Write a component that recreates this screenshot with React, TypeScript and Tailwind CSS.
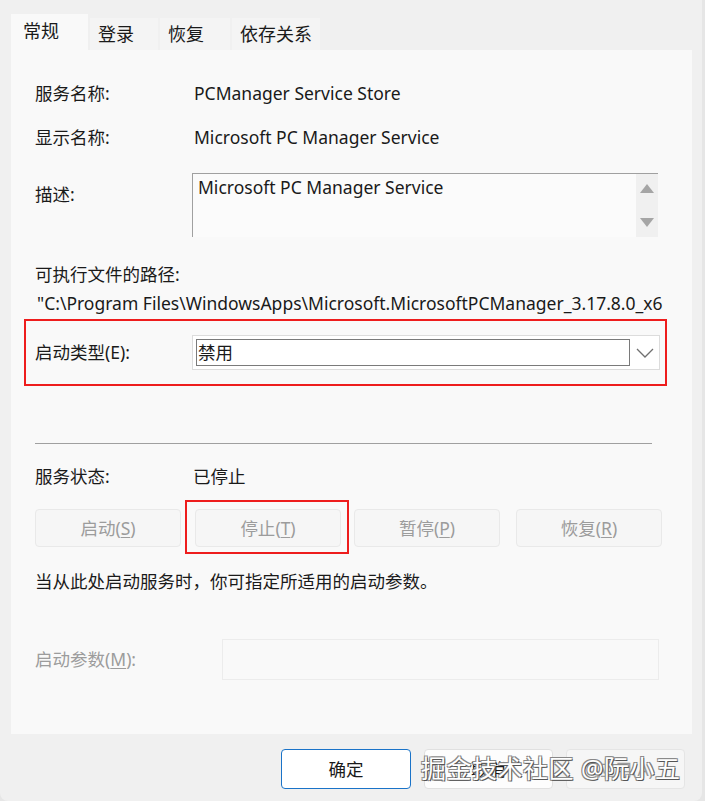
import React from "react";

const font = "font-['Noto_Sans','Noto_Sans_CJK_SC',sans-serif]";

function Tab({ label, width, active }: { label: string; width: string; active?: boolean }) {
  if (active) {
    return (
      <div className={`${width} h-[36px] bg-[#f9f9f9] pl-[12px] pt-[4px] text-[18px] text-[#1a1a1a]`}>
        {label}
      </div>
    );
  }
  return (
    <div className={`${width} mt-[4px] h-[32px] bg-[#f4f4f4] pl-[8px] pt-[3px] text-[18px] text-[#1a1a1a]`}>
      {label}
    </div>
  );
}

function DisabledButton({ text, hot }: { text: string; hot: string }) {
  return (
    <div className="flex h-[38px] w-[146px] items-center justify-center rounded-[4px] border border-[#e9e9e9] bg-[#f6f6f6] text-[17.5px] text-[#9c9c9c]">
      {text}(<span className="underline underline-offset-2">{hot}</span>)
    </div>
  );
}

export default function App() {
  return (
    <div className={`${font} h-[801px] w-[705px] overflow-hidden bg-[#e6e6e6]`}>
      <div className="relative h-[801px] w-[702px] rounded-b-[8px] bg-[#f0f0f0]">
        {/* tab strip */}
        <div className="flex gap-[2px] pl-[11px] pt-[14px]">
          <Tab label="常规" width="w-[77px]" active />
          <Tab label="登录" width="w-[68px]" />
          <Tab label="恢复" width="w-[70px]" />
          <Tab label="依存关系" width="w-[88px]" />
        </div>

        {/* panel */}
        <div className="ml-[11px] h-[684px] w-[681px] bg-[#f9f9f9] pl-[24px] pr-[20px] pt-[27px] text-[17.5px] text-[#1a1a1a]">
          <div className="flex h-[32px] items-center">
            <div className="w-[159px]">服务名称:</div>
            <div>PCManager Service Store</div>
          </div>
          <div className="mt-[12px] flex h-[32px] items-center">
            <div className="w-[159px]">显示名称:</div>
            <div>Microsoft PC Manager Service</div>
          </div>

          {/* description */}
          <div className="mt-[20px] flex">
            <div className="w-[157px] pt-[8px]">描述:</div>
            <div className="flex h-[64px] w-[466px] border-l border-t border-[#a0a0a0] bg-[#fbfbfb]">
              <div className="flex-1 pl-[5px] leading-[26px]">Microsoft PC Manager Service</div>
              <div className="flex w-[22px] flex-col items-center justify-between bg-[#f0f0f0] py-[10px]">
                <svg width="14" height="9" viewBox="0 0 14 9">
                  <path d="M7 0 L14 9 L0 9 Z" fill="#a5a5a5" />
                </svg>
                <svg width="14" height="9" viewBox="0 0 14 9">
                  <path d="M0 0 L14 0 L7 9 Z" fill="#a5a5a5" />
                </svg>
              </div>
            </div>
          </div>

          <div className="mt-[24px] leading-[26px]">可执行文件的路径:</div>
          <div className="mt-[3px] w-[630px] whitespace-nowrap pl-[2px] leading-[26px]">
            "C:\Program Files\WindowsApps\Microsoft.MicrosoftPCManager_3.17.8.0_x6
          </div>

          {/* startup type, highlighted */}
          <div className="-ml-[11px] mt-[3px] flex h-[67px] w-[643px] items-center border-2 border-[#ee1d1d] pl-[9px]">
            <div className="w-[157px]">启动类型(E):</div>
            <div className="flex h-[35px] w-[468px] items-center border border-[#dcdcdc] bg-white pl-[3px]">
              <div className="flex h-[27px] w-[434px] items-center border border-[#7a7a7a] pl-[1px]">禁用</div>
              <div className="flex flex-1 items-center justify-center">
                <svg width="18" height="10" viewBox="0 0 18 10">
                  <path d="M1 1 L9 9 L17 1" fill="none" stroke="#707070" strokeWidth="1.3" />
                </svg>
              </div>
            </div>
          </div>

          <div className="mt-[57px] h-px w-[617px] bg-[#a0a0a0]" />

          <div className="mt-[19px] flex h-[26px] items-center">
            <div className="w-[158px]">服务状态:</div>
            <div>已停止</div>
          </div>

          <div className="mt-[20px] flex h-[38px] items-center">
            <DisabledButton text="启动" hot="S" />
            <div className="relative ml-[14px]">
              <DisabledButton text="停止" hot="T" />
              <div className="absolute -bottom-[7px] -left-[10px] -right-[8px] -top-[9px] border-2 border-[#ee1d1d]" />
            </div>
            <div className="ml-[13px]">
              <DisabledButton text="暂停" hot="P" />
            </div>
            <div className="ml-[16px]">
              <DisabledButton text="恢复" hot="R" />
            </div>
          </div>

          <div className="mt-[21px] leading-[26px]">当从此处启动服务时，你可指定所适用的启动参数。</div>

          <div className="mt-[45px] flex items-center">
            <div className="w-[187px] text-[#9c9c9c]">
              启动参数(<span className="underline underline-offset-2">M</span>):
            </div>
            <div className="h-[41px] w-[437px] border border-[#ececec] bg-[#f9f9f9]" />
          </div>
        </div>

        {/* dialog buttons */}
        <div className="mt-[15px] flex pl-[281px]">
          <div className="flex h-[40px] w-[130px] items-center justify-center rounded-[4px] border border-[#1a73c8] bg-white text-[17.5px] text-[#1a1a1a]">
            确定
          </div>
          <div className="ml-[13px] flex h-[40px] w-[129px] items-center justify-center rounded-[4px] border border-[#e0e0e0] bg-[#fdfdfd] text-[17.5px] text-[#1a1a1a]">
            取消
          </div>
          <div className="ml-[13px] flex h-[40px] w-[119px] items-center justify-center rounded-[4px] border border-[#e5e5e5] bg-[#f6f6f6] text-[17.5px] text-[#9c9c9c]">
            应用(A)
          </div>
        </div>

        {/* watermark */}
        <div className="absolute left-[421px] top-[750px] text-[25px] tracking-[0.5px] text-white [text-shadow:1px_1px_0_#555,-1px_-1px_0_#888,1px_-1px_0_#888,-1px_1px_0_#888]">
          掘金技术社区 @阮小五
        </div>
      </div>
    </div>
  );
}
